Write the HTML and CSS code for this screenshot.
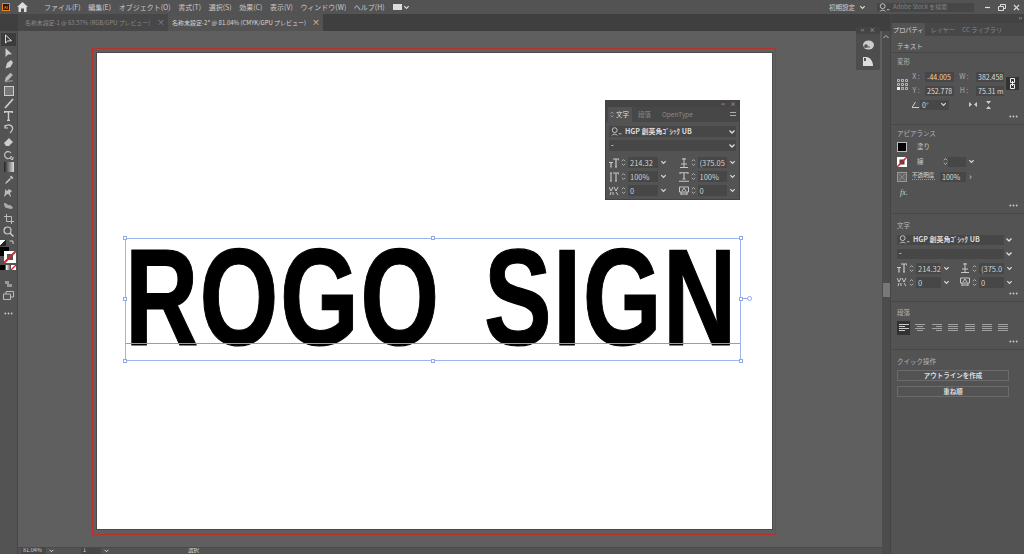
FILE: index.html
```html
<!DOCTYPE html>
<html lang="ja">
<head>
  <meta charset="UTF-8">
  <title>Adobe Illustrator</title>
  <link rel="stylesheet" href="styles.css">
</head>
<body>
  <svg class="defs" width="0" height="0">
    <symbol id="chev" viewBox="0 0 8 8"><path d="M1.500 2.500 4 5l2.500-2.500" fill="none" stroke="#ddd" stroke-width="1.300"/></symbol>
    <symbol id="spin" viewBox="0 0 6 10"><path d="M1 3.500 3 1.500l2 2M1 6.500 3 8.500l2-2" fill="none" stroke="#ccc" stroke-width=".9"/></symbol>
    <symbol id="search" viewBox="0 0 12 10"><circle cx="4" cy="3.500" r="2.700" fill="none" stroke="#ccc"/><path d="M1 9.500c0-2 6-2 6 0M8.500 7.500h3" fill="none" stroke="#ccc"/></symbol>
    <symbol id="size" viewBox="0 0 10 10"><path d="M4 1h6v1.500M7 1v8M6 9h2M0 4.500h4M2 4.500V9M1.300 9h1.400" fill="none" stroke="#c8c8c8" stroke-width="1.200"/></symbol>
    <symbol id="vscale" viewBox="0 0 10 10"><path d="M1 1h2M2 1v8M1 9h2M4 1h6v1.500M7 1v8M6 9h2" fill="none" stroke="#c8c8c8" stroke-width="1.100"/></symbol>
    <symbol id="hscale" viewBox="0 0 10 10"><path d="M1 2V.8h8V2M5 1v6M3.500 7h3M0 9.300h10" fill="none" stroke="#c8c8c8" stroke-width="1.100"/></symbol>
    <symbol id="lead" viewBox="0 0 10 10"><path d="M5 0v4M3 1h4M2 6h6M5 4v5M1 9.500h8" fill="none" stroke="#c8c8c8"/></symbol>
    <symbol id="kern" viewBox="0 0 10 10"><path d="M0 1l2 4 2-4M5 1l2 4 2-4M1 9l1-3M4 6v3M7 6l2 3" fill="none" stroke="#c8c8c8"/></symbol>
    <symbol id="track" viewBox="0 0 10 10"><path d="M.5 1h9v5h-9zM2 6v3M8 6v3M2 8h6M3 5l2-3 2 3" fill="none" stroke="#c8c8c8"/></symbol>
    <symbol id="dots" viewBox="0 0 10 3"><circle cx="1.500" cy="1.500" r="1" fill="#ccc"/><circle cx="5" cy="1.500" r="1" fill="#ccc"/><circle cx="8.500" cy="1.500" r="1" fill="#ccc"/></symbol>
    <symbol id="align-l" viewBox="0 0 10 8"><path d="M0 .5h10M0 2.500h6M0 4.500h10M0 6.500h6" stroke="#ddd" stroke-width=".9"/></symbol>
    <symbol id="align-c" viewBox="0 0 10 8"><path d="M0 .5h10M2 2.500h6M0 4.500h10M2 6.500h6" stroke="#aaa" stroke-width=".9"/></symbol>
    <symbol id="align-r" viewBox="0 0 10 8"><path d="M0 .5h10M4 2.500h6M0 4.500h10M4 6.500h6" stroke="#aaa" stroke-width=".9"/></symbol>
    <symbol id="align-j" viewBox="0 0 10 8"><path d="M0 .5h10M0 2.500h10M0 4.500h10M0 6.500h10" stroke="#aaa" stroke-width=".9"/></symbol>
  </svg>

  <header class="menubar">
    <div class="app-logo">Ai</div>
    <svg class="home" width="11" height="10" viewBox="0 0 11 10"><path d="M5.500 0 0 5h1.500v5H4V6.500h3V10h2.500V5H11z" fill="#ddd"/></svg>
    <nav class="menus">
      <span>ファイル(F)</span><span>編集(E)</span><span>オブジェクト(O)</span><span>書式(T)</span><span>選択(S)</span><span>効果(C)</span><span>表示(V)</span><span>ウィンドウ(W)</span><span>ヘルプ(H)</span>
    </nav>
    <div class="layout-btn"><span class="layout-ico"></span><svg width="7" height="7"><use href="#chev"/></svg></div>
    <div class="menubar-right">
      <div class="workspace-pick">初期設定<svg width="7" height="7"><use href="#chev"/></svg></div>
      <div class="stock-search"><svg width="11" height="9"><use href="#search"/></svg><span>Adobe Stock を検索</span></div>
      <div class="win-controls">
        <svg width="7" height="7" viewBox="0 0 7 7"><path d="M1 3.500h5" stroke="#ddd" stroke-width="1.200"/></svg>
        <svg width="8" height="7" viewBox="0 0 8 7"><path d="M.5 2.500h5v4h-5zM2.500 2V.5h5v4H6" fill="none" stroke="#ddd"/></svg>
        <svg width="7" height="7" viewBox="0 0 7 7"><path d="m1 1 5 5M6 1 1 6" stroke="#ddd" stroke-width="1.200"/></svg>
      </div>
    </div>
  </header>

  <div class="tabbar">
    <div class="tab">名称未設定-1 @ 63.57% (RGB/GPU プレビュー)<i class="close">×</i></div>
    <div class="tab active">名称未設定-2* @ 81.04% (CMYK/GPU プレビュー)<i class="close">×</i></div>
  </div>

  <div class="workspace">
    <aside class="toolbar">
      <div class="tool selected"><svg width="9" height="11" viewBox="0 0 9 11"><path d="M1.500 1v8l2.200-2 3.800-.3z" fill="none" stroke="#ddd"/></svg></div>
      <div class="tool"><svg width="9" height="11" viewBox="0 0 9 11"><path d="M1.500 1v9l2.500-2.500 4-.3z" fill="#ccc"/></svg></div>
      <div class="tool"><svg width="10" height="11" viewBox="0 0 10 11"><path d="M1.500 9.500 3 4l4-3 2 2.500L6.500 8z" fill="#ccc"/></svg></div>
      <div class="tool"><svg width="10" height="11" viewBox="0 0 10 11"><path d="m1 9.500 1-4 4.500-4.500 2 2L4 8zM1 10c3 0 4-2 8-1" fill="#bbb" stroke="#bbb" stroke-width=".5"/></svg></div>
      <div class="tool"><svg width="10" height="10" viewBox="0 0 10 10"><rect x=".5" y=".5" width="9" height="9" fill="#777" stroke="#ccc"/></svg></div>
      <div class="tool"><svg width="10" height="11" viewBox="0 0 10 11"><path d="M1 10 9 1" stroke="#ccc" stroke-width="1.800"/></svg></div>
      <div class="tool"><svg width="9" height="10" viewBox="0 0 9 10"><path d="M.5 2V.7h8V2M4.500 1v8M3 9.500h3" fill="none" stroke="#ccc" stroke-width="1.400"/></svg></div>
      <div class="tool"><svg width="10" height="10" viewBox="0 0 10 10"><path d="M1 2.500C4-.5 9 1 8.500 5c-.2 2-1.500 3-2.500 4M1 1v3h3" fill="none" stroke="#ccc" stroke-width="1.200"/></svg></div>
      <div class="tool"><svg width="11" height="10" viewBox="0 0 11 10"><path d="m1 6 5-5 4 4-4 4H3z" fill="#ccc"/></svg></div>
      <div class="tool"><svg width="11" height="10" viewBox="0 0 11 10"><path d="M8 3a3.500 3.500 0 1 0 .5 3M7 8l2.500 2L10 7" fill="none" stroke="#bbb" stroke-width="1.300"/></svg></div>
      <div class="tool"><svg width="10" height="10" viewBox="0 0 10 10"><defs><linearGradient id="grad"><stop offset="0" stop-color="#222"/><stop offset="1" stop-color="#ddd"/></linearGradient></defs><rect width="10" height="10" fill="url(#grad)"/></svg></div>
      <div class="tool"><svg width="10" height="10" viewBox="0 0 10 10"><path d="m1 9 1-2 4-4 1 1-4 4zM6 2l1-1.500 2.500 2.500L8 4z" fill="#ccc"/></svg></div>
      <div class="tool"><svg width="11" height="10" viewBox="0 0 11 10"><path d="M1 9c2-1 2-3 4-3 1 0 2 3 3 3 0-2-1-3-1-4l2-2-3-2-2 2-2-2v3z" fill="#bbb"/></svg></div>
      <div class="tool"><svg width="11" height="8" viewBox="0 0 11 8"><path d="M1 1c3 0 3 2 5 2s3 1 4 3c-3 2-4 0-6 0S1 4 1 1z" fill="#aaa"/></svg></div>
      <div class="tool"><svg width="10" height="10" viewBox="0 0 10 10"><path d="M2.500 0v7.500H10M0 2.500h7.500V10" fill="none" stroke="#bbb"/></svg></div>
      <div class="tool"><svg width="11" height="11" viewBox="0 0 11 11"><circle cx="4.500" cy="4.500" r="3.500" fill="none" stroke="#ccc" stroke-width="1.200"/><path d="m7 7 3.500 3.500" stroke="#ccc" stroke-width="1.500"/></svg></div>
      <div class="color-tools">
        <div class="swap"><i class="mini-default"></i><svg width="5" height="5" viewBox="0 0 5 5"><path d="M.5 1H4v3" fill="none" stroke="#ccc"/></svg></div>
        <div class="fill-stroke">
          <i class="big-fill"></i>
          <svg class="big-stroke" width="12" height="12" viewBox="0 0 12 12"><rect width="12" height="12" fill="#fff"/><rect x="3" y="3" width="6" height="6" fill="#555"/><path d="M0 12 12 0" stroke="#e0202a" stroke-width="2"/></svg>
        </div>
        <div class="color-modes">
          <i class="mode-black"></i><i class="mode-grad"></i>
          <svg width="5" height="5" viewBox="0 0 5 5"><rect width="5" height="5" fill="#fff"/><path d="M0 5 5 0" stroke="#e0202a" stroke-width="1.300"/></svg>
        </div>
      </div>
      <div class="tool small"><svg width="9" height="8" viewBox="0 0 9 8"><path d="M1 1h4v3H1zM3 4h5v3H3z" fill="#999"/></svg></div>
      <div class="tool small"><svg width="11" height="9" viewBox="0 0 11 9"><path d="M.5 3h7v5.500h-7zM3 3V.5h7.500V6H8" fill="none" stroke="#bbb"/></svg></div>
      <div class="tool more"><svg width="9" height="3"><use href="#dots"/></svg></div>
    </aside>

    <main class="doc-area">
      <div class="canvas">
        <div class="bleed">
          <div class="artboard">
            <div class="logo-text">ROGO SIGN</div>
            <div class="selection">
              <div class="baseline"></div>
              <i class="handle h-tl"></i><i class="handle h-tm"></i><i class="handle h-tr"></i>
              <i class="handle h-ml"></i><i class="handle h-mr"></i>
              <i class="handle h-bl"></i><i class="handle h-bm"></i><i class="handle h-br"></i>
              <i class="connector"></i><i class="thread-port"></i>
            </div>
          </div>
        </div>

        <section class="float-panel">
          <div class="float-head"><span class="grip">‹‹</span><span class="grip">×</span></div>
          <div class="float-tabs">
            <span class="float-tab active"><svg width="4" height="7"><use href="#spin"/></svg>文字</span>
            <span class="float-tab">段落</span>
            <span class="float-tab">OpenType</span>
            <span class="float-menu"></span>
          </div>
          <div class="float-body">
            <div class="select wide"><svg width="11" height="9"><use href="#search"/></svg><b>HGP 創英角ｺﾞｼｯｸ UB</b><svg class="sel-chev" width="8" height="8"><use href="#chev"/></svg></div>
            <div class="select wide"><b>-</b><svg class="sel-chev" width="8" height="8"><use href="#chev"/></svg></div>
            <div class="field-grid">
              <div class="field"><svg width="10" height="10"><use href="#size"/></svg><svg width="5" height="9"><use href="#spin"/></svg><span class="value">214.32</span><svg width="7" height="7"><use href="#chev"/></svg></div>
              <div class="field"><svg width="10" height="10"><use href="#lead"/></svg><svg width="5" height="9"><use href="#spin"/></svg><span class="value">(375.05</span><svg width="7" height="7"><use href="#chev"/></svg></div>
              <div class="field"><svg width="10" height="10"><use href="#vscale"/></svg><svg width="5" height="9"><use href="#spin"/></svg><span class="value">100%</span><svg width="7" height="7"><use href="#chev"/></svg></div>
              <div class="field"><svg width="10" height="10"><use href="#hscale"/></svg><svg width="5" height="9"><use href="#spin"/></svg><span class="value">100%</span><svg width="7" height="7"><use href="#chev"/></svg></div>
              <div class="field"><svg width="10" height="10"><use href="#kern"/></svg><svg width="5" height="9"><use href="#spin"/></svg><span class="value">0</span><svg width="7" height="7"><use href="#chev"/></svg></div>
              <div class="field"><svg width="10" height="10"><use href="#track"/></svg><svg width="5" height="9"><use href="#spin"/></svg><span class="value">0</span><svg width="7" height="7"><use href="#chev"/></svg></div>
            </div>
          </div>
        </section>

        <section class="mini-dock">
          <div class="mini-head"><span class="grip">‹‹</span><span class="grip">×</span></div>
          <svg width="12" height="10" viewBox="0 0 12 10"><ellipse cx="6.500" cy="5" rx="5.500" ry="4.500" fill="#ccc"/><circle cx="4" cy="6" r="1.800" fill="#555"/><path d="M0 7h8" stroke="#555"/></svg>
          <svg width="12" height="11" viewBox="0 0 12 11"><path d="M1 10V1h3c4 0 7 4 7 9z" fill="#ddd"/><path d="M2 2h2v3H2z" fill="#555"/></svg>
        </section>
      </div>
      <footer class="statusbar">
        <span class="status-box">81.04%</span><svg width="7" height="6"><use href="#chev"/></svg>
        <span class="status-page">1</span><svg width="7" height="6"><use href="#chev"/></svg>
        <span class="status-mode">選択</span>
      </footer>
    </main>

    <div class="scrollbar">
      <svg width="6" height="5" viewBox="0 0 6 5"><path d="M.5 4 3 1.500 5.500 4" fill="none" stroke="#bbb"/></svg>
      <i class="scroll-thumb"></i>
    </div>

    <aside class="panel">
      <div class="panel-head"><span class="grip">››</span></div>
      <div class="panel-tabs">
        <span class="panel-tab active">プロパティ</span><span class="panel-tab">レイヤー</span><span class="panel-tab">CC ライブラリ</span>
      </div>

      <section class="sec sec-kind"><h4>テキスト</h4></section>

      <section class="sec sec-transform">
        <h4>変形</h4>
        <div class="tf-grid">
          <svg class="ref-point" width="11" height="11" viewBox="0 0 11 11"><path d="M.5.5h2v2h-2zM4.500.5h2v2h-2zM8.500.5h2v2h-2zM.5 4.500h2v2h-2zM4.500 4.500h2v2h-2zM8.500 4.500h2v2h-2zM4.500 8.500h2v2h-2zM8.500 8.500h2v2h-2z" fill="none" stroke="#ccc" stroke-width=".8"/><rect y="8" width="3" height="3" fill="#eee"/></svg>
          <div class="tf-fields">
            <label>X :</label><span class="input orange">-44.005</span><label>W :</label><span class="input">382.458</span>
            <label>Y :</label><span class="input">252.778</span><label>H :</label><span class="input">75.31 m</span>
          </div>
          <div class="link-btn"><svg width="5" height="11" viewBox="0 0 5 11"><path d="M.5.5h4v4h-4zM.5 6.500h4v4h-4zM2.500 3v5" fill="none" stroke="#eee"/></svg></div>
        </div>
        <div class="tf-angle">
          <svg width="7" height="6" viewBox="0 0 7 6"><path d="M3.500 0 0 5.500h7" fill="none" stroke="#ccc"/></svg>
          <span class="input angle">0°<svg width="7" height="7"><use href="#chev"/></svg></span>
          <svg class="flip" width="8" height="7" viewBox="0 0 8 7"><path d="M0 1l3 2.500L0 6zM8 1 5 3.500 8 6z" fill="#ccc"/></svg>
          <svg width="7" height="8" viewBox="0 0 7 8"><path d="M1 0l2.500 3L6 0zM1 8l2.500-3L6 8z" fill="#ccc"/></svg>
        </div>
        <svg class="more-dots" width="9" height="3"><use href="#dots"/></svg>
      </section>

      <section class="sec sec-appearance">
        <h4>アピアランス</h4>
        <div class="ap-row"><i class="swatch black"></i><span class="ap-label">塗り</span></div>
        <div class="ap-row">
          <svg class="swatch-svg" width="10" height="10" viewBox="0 0 10 10"><rect width="10" height="10" fill="#fff"/><rect x="2.500" y="2.500" width="5" height="5" fill="#444"/><path d="M0 10 10 0" stroke="#e0202a" stroke-width="1.500"/></svg>
          <span class="ap-label">線</span>
          <svg width="5" height="9"><use href="#spin"/></svg>
          <span class="input stroke-w"></span><svg width="7" height="7"><use href="#chev"/></svg>
        </div>
        <div class="ap-row">
          <svg class="swatch-svg" width="10" height="10" viewBox="0 0 10 10"><rect x=".5" y=".5" width="9" height="9" fill="#666" stroke="#999"/><path d="M2 2l6 6M8 2 2 8" stroke="#888"/></svg>
          <span class="ap-label under">不透明度</span>
          <span class="input opacity">100%</span><span class="gt">›</span>
        </div>
        <div class="fx">fx.</div>
        <svg class="more-dots" width="9" height="3"><use href="#dots"/></svg>
      </section>

      <section class="sec sec-char">
        <h4>文字</h4>
        <div class="select"><svg width="11" height="9"><use href="#search"/></svg><b>HGP 創英角ｺﾞｼｯｸ UB</b></div><svg class="out-chev" width="8" height="8"><use href="#chev"/></svg>
        <div class="select"><b>-</b></div><svg class="out-chev" width="8" height="8"><use href="#chev"/></svg>
        <div class="char-grid">
          <div class="field"><svg width="10" height="10"><use href="#size"/></svg><svg width="5" height="9"><use href="#spin"/></svg><span class="value">214.32</span><svg width="7" height="7"><use href="#chev"/></svg></div>
          <div class="field"><svg width="10" height="10"><use href="#lead"/></svg><svg width="5" height="9"><use href="#spin"/></svg><span class="value">(375.0</span><svg width="7" height="7"><use href="#chev"/></svg></div>
          <div class="field"><svg width="10" height="10"><use href="#kern"/></svg><svg width="5" height="9"><use href="#spin"/></svg><span class="value">0</span><svg width="7" height="7"><use href="#chev"/></svg></div>
          <div class="field"><svg width="10" height="10"><use href="#track"/></svg><svg width="5" height="9"><use href="#spin"/></svg><span class="value">0</span><svg width="7" height="7"><use href="#chev"/></svg></div>
        </div>
        <svg class="more-dots" width="9" height="3"><use href="#dots"/></svg>
      </section>

      <section class="sec sec-para">
        <h4>段落</h4>
        <div class="align-row">
          <span class="align-btn on"><svg width="10" height="8"><use href="#align-l"/></svg></span>
          <span class="align-btn"><svg width="10" height="8"><use href="#align-c"/></svg></span>
          <span class="align-btn"><svg width="10" height="8"><use href="#align-r"/></svg></span>
          <span class="align-btn"><svg width="10" height="8"><use href="#align-j"/></svg></span>
          <span class="align-btn"><svg width="10" height="8"><use href="#align-j"/></svg></span>
          <span class="align-btn"><svg width="10" height="8"><use href="#align-j"/></svg></span>
          <span class="align-btn"><svg width="10" height="8"><use href="#align-j"/></svg></span>
        </div>
        <svg class="more-dots" width="9" height="3"><use href="#dots"/></svg>
      </section>

      <section class="sec sec-quick">
        <h4>クイック操作</h4>
        <div class="quick-btn">アウトラインを作成</div>
        <div class="quick-btn">重ね順</div>
      </section>
    </aside>
  </div>
</body>
</html>
```

FILE: styles.css
```css
* {
  box-sizing: border-box;
}
html, body {
  margin: 0;
  height: 100%;
  overflow: hidden;
}
body {
  width: 1024px;
  height: 554px;
  display: flex;
  flex-direction: column;
  background-color: #535353;
  color: #cfcfcf;
  font-family: "Noto Sans CJK JP", "Noto Sans", sans-serif;
  font-size: 7px;
  line-height: 1;
}
i {
  font-style: normal;
}
svg {
  display: block;
  flex: none;
}
.defs {
  position: absolute;
}

/* menu bar */
.menubar {
  height: 14px;
  flex: none;
  display: flex;
  align-items: center;
  background-color: #535353;
  font-size: 7px;
  position: relative;
}
.app-logo {
  width: 8px;
  height: 8px;
  margin-left: 2px;
  background-color: #2b1503;
  border: 1px solid #e8891c;
  color: #e8891c;
  font-size: 4px;
  font-weight: bold;
  text-align: center;
  line-height: 6px;
}
.home {
  margin-left: 7px;
}
.menus {
  margin-left: 16px;
  display: flex;
  gap: 7.600px;
  color: #c8c8c8;
  white-space: nowrap;
}
.layout-btn {
  margin-left: 8px;
  display: flex;
  align-items: center;
  gap: 1px;
}
.layout-ico {
  width: 9px;
  height: 6px;
  background-color: #ddd;
}
.menubar-right {
  margin-left: auto;
  display: flex;
  align-items: center;
}
.workspace-pick {
  display: flex;
  align-items: center;
  gap: 4px;
  font-size: 6.500px;
  width: 48px;
}
.stock-search {
  width: 97px;
  height: 9px;
  background-color: #474747;
  display: flex;
  align-items: center;
  gap: 3px;
  padding-left: 2px;
  font-size: 6px;
  color: #808080;
}
.win-controls {
  width: 50px;
  padding-left: 10px;
  padding-right: 4px;
  display: flex;
  justify-content: space-between;
}

/* tabs */
.tabbar {
  height: 17px;
  flex: none;
  display: flex;
  padding-left: 18px;
  background-color: #3f3f3f;
  font-size: 5.900px;
}
.tab {
  width: 150px;
  padding-left: 7px;
  display: flex;
  align-items: center;
  color: #8a8a8a;
  background-color: #474747;
  position: relative;
  white-space: nowrap;
}
.tab.active {
  width: 155px;
  padding-left: 4px;
  background-color: #535353;
  color: #d8d8d8;
  font-size: 6px;
}
.close {
  position: absolute;
  right: 3px;
  top: 4px;
  font-size: 8px;
}

/* layout */
.workspace {
  flex: 1;
  min-height: 0;
  display: flex;
}
.toolbar {
  width: 18px;
  flex: none;
  padding-top: 2px;
  background-color: #535353;
  border-right: 1px solid #454545;
  display: flex;
  flex-direction: column;
}
.tool {
  height: 12.800px;
  width: 15px;
  margin-left: 1px;
  display: flex;
  align-items: center;
  justify-content: center;
}
.tool.selected {
  background-color: #3c3c3c;
}
.tool.small {
  height: 11px;
}
.tool.more {
  height: 16px;
  margin-top: 5px;
}
.color-tools {
  height: 41px;
  padding-top: 2px;
}
.swap {
  display: flex;
  justify-content: space-between;
  padding-right: 3px;
}
.mini-default {
  width: 6px;
  height: 6px;
  background: linear-gradient(135deg, #fff 50%, #222 50%);
}
.fill-stroke {
  height: 17px;
  margin-top: 1px;
  position: relative;
}
.big-fill {
  display: block;
  width: 9px;
  height: 9px;
  background-color: #000;
}
.big-stroke {
  position: absolute;
  left: 4px;
  top: 4px;
}
.color-modes {
  margin-top: 1px;
  display: flex;
  gap: 1px;
}
.mode-black {
  width: 5px;
  height: 5px;
  background-color: #000;
}
.mode-grad {
  width: 4px;
  height: 5px;
  background: linear-gradient(90deg, #fff, #666);
}

/* document */
.doc-area {
  flex: 1;
  min-width: 0;
  display: flex;
  flex-direction: column;
}
.canvas {
  flex: 1;
  min-height: 0;
  position: relative;
  padding: 17px 0 0 74px;
  background-color: #5f5f5f;
}
.bleed {
  width: 684px;
  height: 487px;
  padding: 4px 3px 4px 4px;
  border: 1px solid #b8302b;
}
.artboard {
  width: 675px;
  height: 476px;
  background-color: #fff;
  outline: 1px solid #4a4a4a;
  position: relative;
  overflow: visible;
}
.logo-text {
  position: absolute;
  left: 28px;
  top: 176px;
  font-family: "Liberation Sans", Arial, sans-serif;
  font-weight: bold;
  font-size: 137px;
  line-height: 1;
  letter-spacing: 1.900px;
  word-spacing: 19px;
  color: #000;
  -webkit-text-stroke: 1.200px #000;
  white-space: nowrap;
  transform: scaleX(0.74);
  transform-origin: left top;
}
.selection {
  position: absolute;
  left: 28px;
  top: 185px;
  width: 616px;
  height: 123px;
  border: 1px solid #9db5ee;
}
.baseline {
  position: absolute;
  left: 0;
  right: 0;
  top: 104px;
  height: 1px;
  background-color: #7f9cf5;
}
.handle {
  position: absolute;
  width: 4px;
  height: 4px;
  background-color: #fff;
  border: 1px solid #8ea9ee;
}
.h-tl { left: -3px; top: -3px; }
.h-tm { left: 305px; top: -3px; }
.h-tr { right: -3px; top: -3px; }
.h-ml { left: -3px; top: 58px; }
.h-mr { right: -3px; top: 58px; }
.h-bl { left: -3px; bottom: -3px; }
.h-bm { left: 305px; bottom: -3px; }
.h-br { right: -3px; bottom: -3px; }
.connector {
  position: absolute;
  left: 616px;
  top: 59px;
  width: 6px;
  height: 1px;
  background-color: #8ea9ee;
}
.thread-port {
  position: absolute;
  left: 621px;
  top: 57px;
  width: 5px;
  height: 5px;
  border: 1px solid #8ea9ee;
  border-radius: 50%;
  background-color: #fff;
}

/* character panel over the canvas */
.float-panel {
  position: absolute;
  left: 587px;
  top: 69px;
  width: 135px;
  height: 100px;
  background-color: #535353;
  border: 1px solid #444;
  font-size: 7px;
}
.float-head {
  height: 6px;
  background-color: #444;
  display: flex;
  justify-content: flex-end;
  gap: 5px;
  padding-right: 3px;
}
.grip {
  font-size: 6px;
  line-height: 6px;
  color: #bbb;
}
.float-tabs {
  height: 15px;
  background-color: #474747;
  display: flex;
  align-items: center;
  gap: 1px;
  position: relative;
  color: #8a8a8a;
  font-size: 6.500px;
}
.float-tab {
  height: 15px;
  padding: 0 5px;
  display: flex;
  align-items: center;
  gap: 2px;
}
.float-tab.active {
  background-color: #535353;
  color: #ddd;
  padding: 0 3px 0 2px;
  margin-left: 2px;
}
.float-menu {
  position: absolute;
  right: 3px;
  top: 5px;
  width: 6px;
  height: 4px;
  border-top: 1px solid #aaa;
  border-bottom: 1px solid #aaa;
}
.float-body {
  padding: 4px 3px 0;
}
.select {
  height: 11px;
  background-color: #474747;
  display: flex;
  align-items: center;
  gap: 3px;
  padding-left: 2px;
  font-size: 7px;
  color: #ddd;
}
.select b {
  font-weight: bold;
}
.select.wide {
  margin-bottom: 3px;
  position: relative;
}
.sel-chev {
  margin-left: auto;
}
.field-grid {
  margin-top: 6px;
  display: grid;
  grid-template-columns: 1fr 1fr;
  column-gap: 12px;
  row-gap: 3px;
}
.field {
  height: 11px;
  display: flex;
  align-items: center;
  gap: 2px;
  font-size: 7.500px;
}
.value {
  flex: 1;
  height: 11px;
  min-width: 0;
  padding-left: 2px;
  background-color: #474747;
  line-height: 11px;
  overflow: hidden;
  white-space: nowrap;
}

.mini-dock {
  position: absolute;
  right: 2px;
  top: -4px;
  width: 24px;
  height: 43px;
  background-color: #4d4d4d;
  display: flex;
  flex-direction: column;
  align-items: center;
  gap: 6px;
}
.mini-head {
  width: 100%;
  height: 7px;
  background-color: #444;
  display: flex;
  justify-content: center;
  gap: 5px;
}

/* status bar */
.statusbar {
  height: 7px;
  flex: none;
  display: flex;
  align-items: flex-start;
  background-color: #535353;
  border-top: 1px solid #4a4a4a;
  padding-left: 3px;
  overflow: hidden;
  font-size: 5.500px;
}
.status-box {
  width: 25px;
  height: 6px;
  background-color: #474747;
  padding-left: 2px;
  margin-right: 2px;
}
.status-page {
  width: 20px;
  height: 6px;
  margin-left: 26px;
  margin-right: 2px;
  background-color: #474747;
  padding-left: 2px;
}
.status-mode {
  margin-left: 78px;
  color: #ddd;
}

.scrollbar {
  width: 8px;
  flex: none;
  background-color: #4c4c4c;
  position: relative;
  padding: 3px 1px;
}
.scroll-thumb {
  position: absolute;
  left: 1px;
  top: 252px;
  width: 7px;
  height: 14px;
  background-color: #787878;
}

/* properties panel */
.panel {
  width: 134px;
  flex: none;
  margin-top: -17px;
  position: relative;
  background-color: #535353;
  border-left: 1px solid #454545;
}
.panel-head {
  height: 9px;
  background-color: #424242;
  text-align: right;
  padding-right: 2px;
}
.panel-tabs {
  height: 13px;
  background-color: #474747;
  display: flex;
  padding-left: 1px;
  color: #8a8a8a;
  font-size: 6.200px;
  gap: 5px;
  white-space: nowrap;
}
.panel-tab {
  padding: 0 1px;
  line-height: 13px;
}
.panel-tab.active {
  background-color: #535353;
  color: #ddd;
  padding: 0 1px 0 1px;
}
.sec {
  position: relative;
  padding: 0 6px;
  border-bottom: 1px solid #474747;
}
.sec h4 {
  margin: 0;
  font-size: 6.500px;
  font-weight: normal;
  color: #b5b5b5;
}
.more-dots {
  position: absolute;
  right: 6px;
  bottom: 6px;
}
.sec-kind {
  height: 17px;
  padding-top: 7px;
}
.sec-kind h4 {
  color: #cfcfcf;
}
.sec-transform {
  height: 72px;
  padding-top: 5px;
}
.tf-grid {
  margin-top: 7px;
  height: 24px;
  position: relative;
}
.ref-point {
  position: absolute;
  left: 0;
  top: 7px;
}
.tf-fields {
  position: absolute;
  left: 12px;
  top: 0;
  display: grid;
  grid-template-columns: 16px 29px 22px 28px;
  grid-auto-rows: 10px;
  row-gap: 4px;
  align-items: center;
}
.tf-fields label {
  text-align: center;
  color: #aaa;
  padding-right: 2px;
}
.input {
  display: block;
  height: 10px;
  background-color: #474747;
  color: #ddd;
  padding-left: 2px;
  font-size: 7px;
  line-height: 10px;
  white-space: nowrap;
  overflow: hidden;
}
.orange {
  color: #f2cfa8;
}
.link-btn {
  position: absolute;
  left: 109px;
  top: 5px;
  width: 13px;
  height: 13px;
  background-color: #333;
  display: flex;
  align-items: center;
  justify-content: center;
}
.tf-angle {
  margin-top: 4px;
  padding-left: 15px;
  display: flex;
  align-items: center;
}
.angle {
  margin-left: 1px;
  width: 29px;
  display: flex;
  align-items: center;
  justify-content: space-between;
  margin-right: 20px;
  padding-right: 2px;
}
.flip {
  margin-right: 8px;
}
.sec-appearance {
  height: 89px;
  padding-top: 5px;
}
.sec-appearance h4 {
  margin-bottom: 2px;
}
.ap-row {
  height: 10px;
  margin-top: 5px;
  display: flex;
  align-items: center;
}
.swatch {
  display: block;
  width: 10px;
  height: 10px;
  background-color: #000;
  border: 1px solid #bbb;
}
.ap-label {
  margin-left: 10px;
  width: 26px;
  font-size: 6.500px;
  color: #c8c8c8;
}
.ap-row .under {
  margin-left: 5px;
  width: 23px;
  font-size: 5.600px;
  white-space: nowrap;
  border-bottom: 1px dotted #999;
  padding-bottom: 1px;
  color: #ddd;
}
.stroke-w {
  width: 18px;
  margin-right: 2px;
}
.opacity {
  width: 26px;
  margin-left: 5px;
}
.gt {
  margin-left: 3px;
  font-size: 9px;
}
.fx {
  margin-top: 7px;
  margin-left: 3px;
  font-family: "Liberation Serif", serif;
  font-style: italic;
  font-size: 8px;
}
.sec-char {
  height: 88px;
  padding-top: 8px;
}
.sec-char h4 {
  margin-bottom: 6px;
}
.sec-char .select {
  width: 107px;
  height: 10px;
  margin-bottom: 4px;
}
.out-chev {
  position: absolute;
  right: 11px;
  margin-top: -13px;
}
.char-grid {
  margin-top: 3px;
  display: grid;
  grid-template-columns: 53px 53px;
  column-gap: 10px;
  row-gap: 3px;
}
.sec-para {
  height: 48px;
  padding-top: 7px;
}
.align-row {
  margin-top: 5px;
  display: flex;
  justify-content: space-between;
  width: 113px;
}
.align-btn {
  width: 13px;
  height: 14px;
  display: flex;
  align-items: center;
  justify-content: center;
}
.align-btn.on {
  background-color: #333;
}
.sec-quick {
  border-bottom: none;
  padding-top: 8px;
}
.sec-quick h4 {
  margin-bottom: 2px;
}
.quick-btn {
  width: 112px;
  height: 11px;
  margin-top: 5px;
  border: 1px solid #6b6b6b;
  text-align: center;
  line-height: 9px;
  font-size: 6.500px;
  font-weight: bold;
  color: #ddd;
}
```
